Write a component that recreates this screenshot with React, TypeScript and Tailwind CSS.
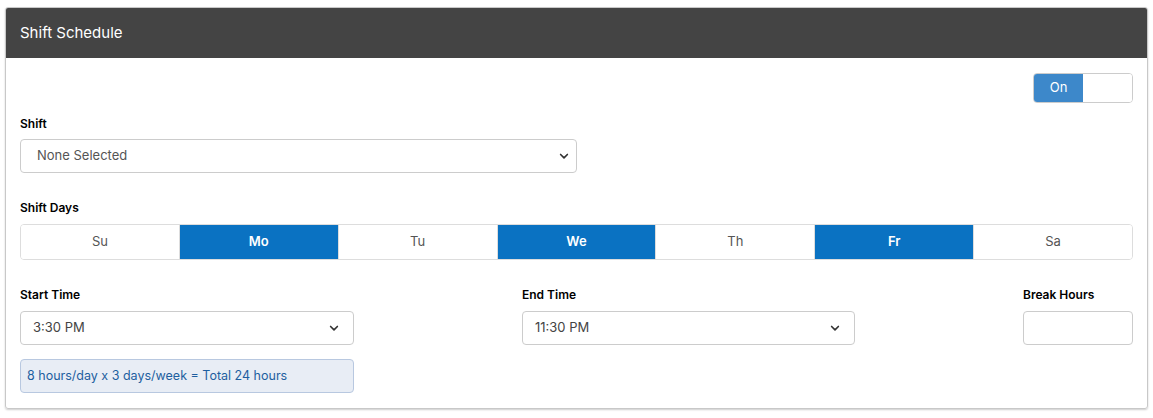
import React from "react";

const Chev = () => (
  <svg width="12" height="12" viewBox="0 0 16 16" fill="none" stroke="#333" strokeWidth="2.2" strokeLinecap="round" strokeLinejoin="round"><path d="M3.5 6l4.5 4.5L12.5 6" /></svg>
);

export default function App() {
  const days = [["Su", false], ["Mo", true], ["Tu", false], ["We", true], ["Th", false], ["Fr", true], ["Sa", false]] as const;
  return (
    <div className="bg-white w-[1153px] h-[418px] pt-[7px] pl-[5px]" style={{ fontFamily: "Inter, 'Noto Sans', sans-serif" }}>
      <div className="w-[1143px] h-[402px] border border-[#c8c8c8] rounded-[3px] shadow-[0_1px_2px_rgba(0,0,0,0.2)] overflow-hidden">
        <div className="h-[50px] bg-[#444444] flex items-center px-[14px] text-white text-[15px]">Shift Schedule</div>
        <div className="px-[14px]">
          <div className="flex justify-end pt-[15px]">
            <div className="flex w-[100px] h-[30px] border border-[#ccc] rounded-[4px] overflow-hidden">
              <div className="w-[49px] bg-[#3d88ca] text-white text-[13px] flex items-center justify-center">On</div>
              <div className="flex-1 bg-white" />
            </div>
          </div>
          <div className="text-[12px] font-semibold text-black mt-[12px]">Shift</div>
          <div className="mt-[6px] w-[557px] h-[34px] border border-[#ccc] rounded-[4px] flex items-center justify-between pl-[16px] pr-[6px] text-[13px] text-[#555]">
            None Selected <Chev />
          </div>
          <div className="text-[12px] font-semibold text-black mt-[26px]">Shift Days</div>
          <div className="mt-[7px] flex h-[36px] border border-[#ddd] rounded-[4px] overflow-hidden w-[1113px]">
            {days.map(([d, on], i) => (
              <div key={d} className={`flex-1 flex items-center justify-center text-[13px] ${i > 0 ? "border-l border-[#ddd]" : ""} ${on ? "bg-[#0a72c2] text-white font-semibold" : "bg-white text-[#555]"}`}>{d}</div>
            ))}
          </div>
          <div className="flex mt-[26px]">
            <div className="w-[502px]">
              <div className="text-[12px] font-semibold text-black">Start Time</div>
              <div className="mt-[7px] w-[334px] h-[34px] border border-[#ccc] rounded-[4px] flex items-center justify-between pl-[12px] pr-[13px] text-[13px] text-[#444]">3:30 PM <Chev /></div>
              <div className="mt-[14px] w-[334px] h-[34px] border border-[#b8c8e0] bg-[#e8edf5] rounded-[4px] flex items-center px-[6px] text-[12.5px] text-[#1e5fa0]">8 hours/day x 3 days/week = Total 24 hours</div>
            </div>
            <div className="w-[501px]">
              <div className="text-[12px] font-semibold text-black">End Time</div>
              <div className="mt-[7px] w-[333px] h-[34px] border border-[#ccc] rounded-[4px] flex items-center justify-between pl-[12px] pr-[13px] text-[13px] text-[#444]">11:30 PM <Chev /></div>
            </div>
            <div>
              <div className="text-[12px] font-semibold text-black">Break Hours</div>
              <div className="mt-[7px] w-[110px] h-[34px] border border-[#ccc] rounded-[4px]" />
            </div>
          </div>
        </div>
      </div>
    </div>
  );
}
